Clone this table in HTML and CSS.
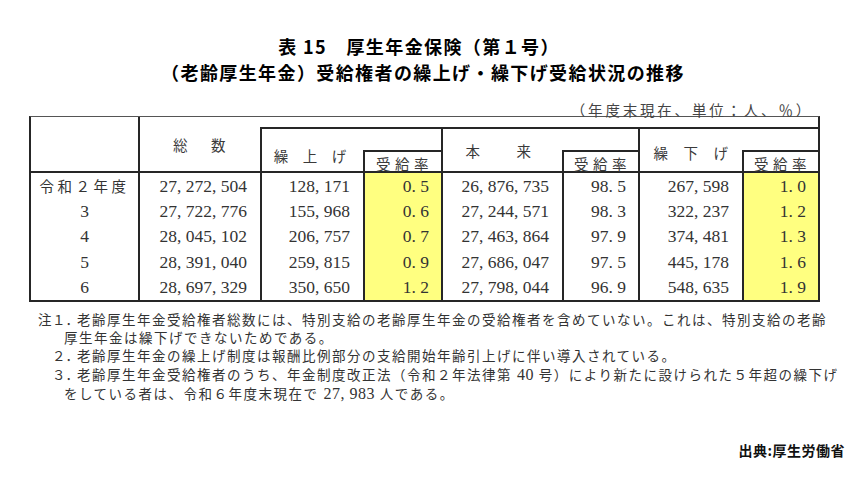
FILE: index.html
```html
<!DOCTYPE html>
<html lang="ja">
<head>
<meta charset="utf-8">
<title>表15 厚生年金保険（第１号）</title>
<link rel="stylesheet" href="styles.css">
</head>
<body>
<div class="page">
  <h1 class="title">
    <span class="t1">表 15　厚生年金保険（第１号）</span>
    <span class="t2">（老齢厚生年金）受給権者の繰上げ・繰下げ受給状況の推移</span>
  </h1>
  <div class="unit">（年度末現在、単位：人、％）</div>

  <div class="tbl">
    <div class="hd c1"></div>
    <div class="hd total">総　数</div>
    <div class="strip"></div>
    <div class="hd grp g1">繰　上　げ</div>
    <div class="sp s1"></div>
    <div class="hd rate r1">受給率</div>
    <div class="hd grp g2">本　　来</div>
    <div class="sp s2"></div>
    <div class="hd rate r2">受給率</div>
    <div class="hd grp g3">繰　下　げ</div>
    <div class="sp s3"></div>
    <div class="hd rate r3">受給率</div>

    <div class="yr yr0">令和２年度</div>
    <div class="n">27, 272, 504</div><div class="n">128, 171</div><div class="n rt y">0. 5</div>
    <div class="n">26, 876, 735</div><div class="n rt">98. 5</div><div class="n">267, 598</div><div class="n rt y">1. 0</div>

    <div class="yr">3</div>
    <div class="n">27, 722, 776</div><div class="n">155, 968</div><div class="n rt y">0. 6</div>
    <div class="n">27, 244, 571</div><div class="n rt">98. 3</div><div class="n">322, 237</div><div class="n rt y">1. 2</div>

    <div class="yr">4</div>
    <div class="n">28, 045, 102</div><div class="n">206, 757</div><div class="n rt y">0. 7</div>
    <div class="n">27, 463, 864</div><div class="n rt">97. 9</div><div class="n">374, 481</div><div class="n rt y">1. 3</div>

    <div class="yr">5</div>
    <div class="n">28, 391, 040</div><div class="n">259, 815</div><div class="n rt y">0. 9</div>
    <div class="n">27, 686, 047</div><div class="n rt">97. 5</div><div class="n">445, 178</div><div class="n rt y">1. 6</div>

    <div class="yr">6</div>
    <div class="n">28, 697, 329</div><div class="n">350, 650</div><div class="n rt y">1. 2</div>
    <div class="n">27, 798, 044</div><div class="n rt">96. 9</div><div class="n">548, 635</div><div class="n rt y">1. 9</div>
  </div>

  <div class="notes">
    <p class="first"><span class="lab">注</span><span class="num">１．</span>老齢厚生年金受給権者総数には、特別支給の老齢厚生年金の受給権者を含めていない。これは、特別支給の老齢<br>厚生年金は繰下げできないためである。</p>
    <p class="item"><span class="num">２．</span>老齢厚生年金の繰上げ制度は報酬比例部分の支給開始年齢引上げに伴い導入されている。</p>
    <p class="item"><span class="num">３．</span>老齢厚生年金受給権者のうち、年金制度改正法（令和２年法律第 <span class="dg">40</span> 号）により新たに設けられた５年超の繰下げ<br>をしている者は、令和６年度末現在で <span class="dg">27, 983</span> 人である。</p>
  </div>

  <div class="src">出典:厚生労働省</div>
</div>
</body>
</html>
```

FILE: styles.css
```css
html, body {
  margin: 0;
  padding: 0;
  background: #ffffff;
}

.page {
  width: 848px;
  height: 477px;
  overflow: hidden;
  font-family: "Liberation Serif", "Noto Sans CJK JP", serif;
  color: #333333;
}

.title {
  margin: 0;
  padding-top: 33px;
  font-family: "Noto Sans CJK JP", sans-serif;
  font-weight: 700;
  font-size: 18px;
  line-height: 26px;
  letter-spacing: 1.4px;
  text-align: center;
  color: #000000;
}

.title span {
  display: block;
}

.title .t1 {
  padding-right: 10px;
}

.title .t2 {
  padding-right: 2px;
}

.unit {
  margin-top: 18px;
  height: 13px;
  line-height: 13px;
  text-align: right;
  padding-right: 35px;
  font-family: "Noto Sans CJK JP", sans-serif;
  font-size: 14.5px;
  letter-spacing: 2.8px;
  color: #444444;
}

/* ---------- table ---------- */
.tbl {
  display: grid;
  width: fit-content;
  margin-left: 29px;
  grid-template-columns: 107px 122px 103px 78px 121px 76px 104px 76px;
  grid-template-rows: 10px 23px 23px repeat(5, 25.4px);
  border: 2px solid #262626;
  border-top: 1px solid #555555;
  color: #333333;
}

.tbl > div {
  box-sizing: border-box;
}

.hd {
  display: flex;
  align-items: center;
  justify-content: center;
  font-family: "Noto Sans CJK JP", sans-serif;
  font-size: 14.5px;
  color: #3a3a3a;
  border-bottom: 2px solid #262626;
}

.c1 {
  grid-column: 1;
  grid-row: 1 / 4;
}

.total {
  grid-column: 2;
  grid-row: 1 / 4;
  border-left: 2px solid #262626;
  letter-spacing: 4.5px;
  padding-left: 3px;
}

.strip {
  grid-column: 3 / 9;
  grid-row: 1;
}

.grp {
  grid-row: 2 / 4;
  border-left: 2px solid #262626;
  border-top: 2px solid #262626;
}

.g1 {
  grid-column: 3;
  padding-top: 10px;
  padding-right: 5px;
}

.g2 {
  grid-column: 5;
  letter-spacing: 2.5px;
  padding-right: 6px;
}

.g3 {
  grid-column: 7;
  letter-spacing: 0.5px;
  padding-top: 4px;
}

.sp {
  grid-row: 2;
  border-top: 2px solid #262626;
}

.s1 { grid-column: 4; }
.s2 { grid-column: 6; }
.s3 { grid-column: 8; }

.rate {
  grid-row: 3;
  border-left: 2px solid #262626;
  border-top: 2px solid #262626;
  letter-spacing: 4.5px;
  padding-top: 3px;
  padding-left: 3px;
}

.r1 { grid-column: 4; }
.r2 { grid-column: 6; }
.r3 { grid-column: 8; }

.yr {
  display: flex;
  align-items: center;
  justify-content: center;
  font-size: 17.5px;
  padding-top: 1px;
}

.yr0 {
  font-family: "Noto Sans CJK JP", sans-serif;
  font-size: 14.5px;
  letter-spacing: 3.5px;
  padding-top: 0;
}

.n {
  display: flex;
  align-items: center;
  justify-content: flex-end;
  padding-right: 13px;
  padding-top: 1px;
  font-size: 17.5px;
  white-space: nowrap;
  border-left: 2px solid #262626;
}

.n.rt {
  padding-right: 12px;
}

.n.y {
  background: #ffff80;
}

/* ---------- notes ---------- */
.notes {
  margin-top: 10px;
  font-size: 13.5px;
  line-height: 18px;
  letter-spacing: 1.5px;
  color: #333333;
}

.notes p {
  margin: 0;
  padding-left: 64px;
  white-space: nowrap;
}

.notes p.first {
  text-indent: -26px;
}

.notes p.item {
  text-indent: -12px;
}

.notes .lab,
.notes .num {
  display: inline-block;
  text-indent: 0;
  letter-spacing: 0;
}

.notes .lab {
  width: 14px;
}

.notes .num {
  width: 25px;
}

.notes .dg {
  font-size: 16px;
  letter-spacing: 0.5px;
}

.src {
  margin-top: 37px;
  text-align: right;
  padding-right: 3px;
  font-family: "Noto Sans CJK JP", sans-serif;
  font-weight: 700;
  font-size: 14px;
  line-height: 18px;
  letter-spacing: 0.5px;
  color: #111111;
}
```
